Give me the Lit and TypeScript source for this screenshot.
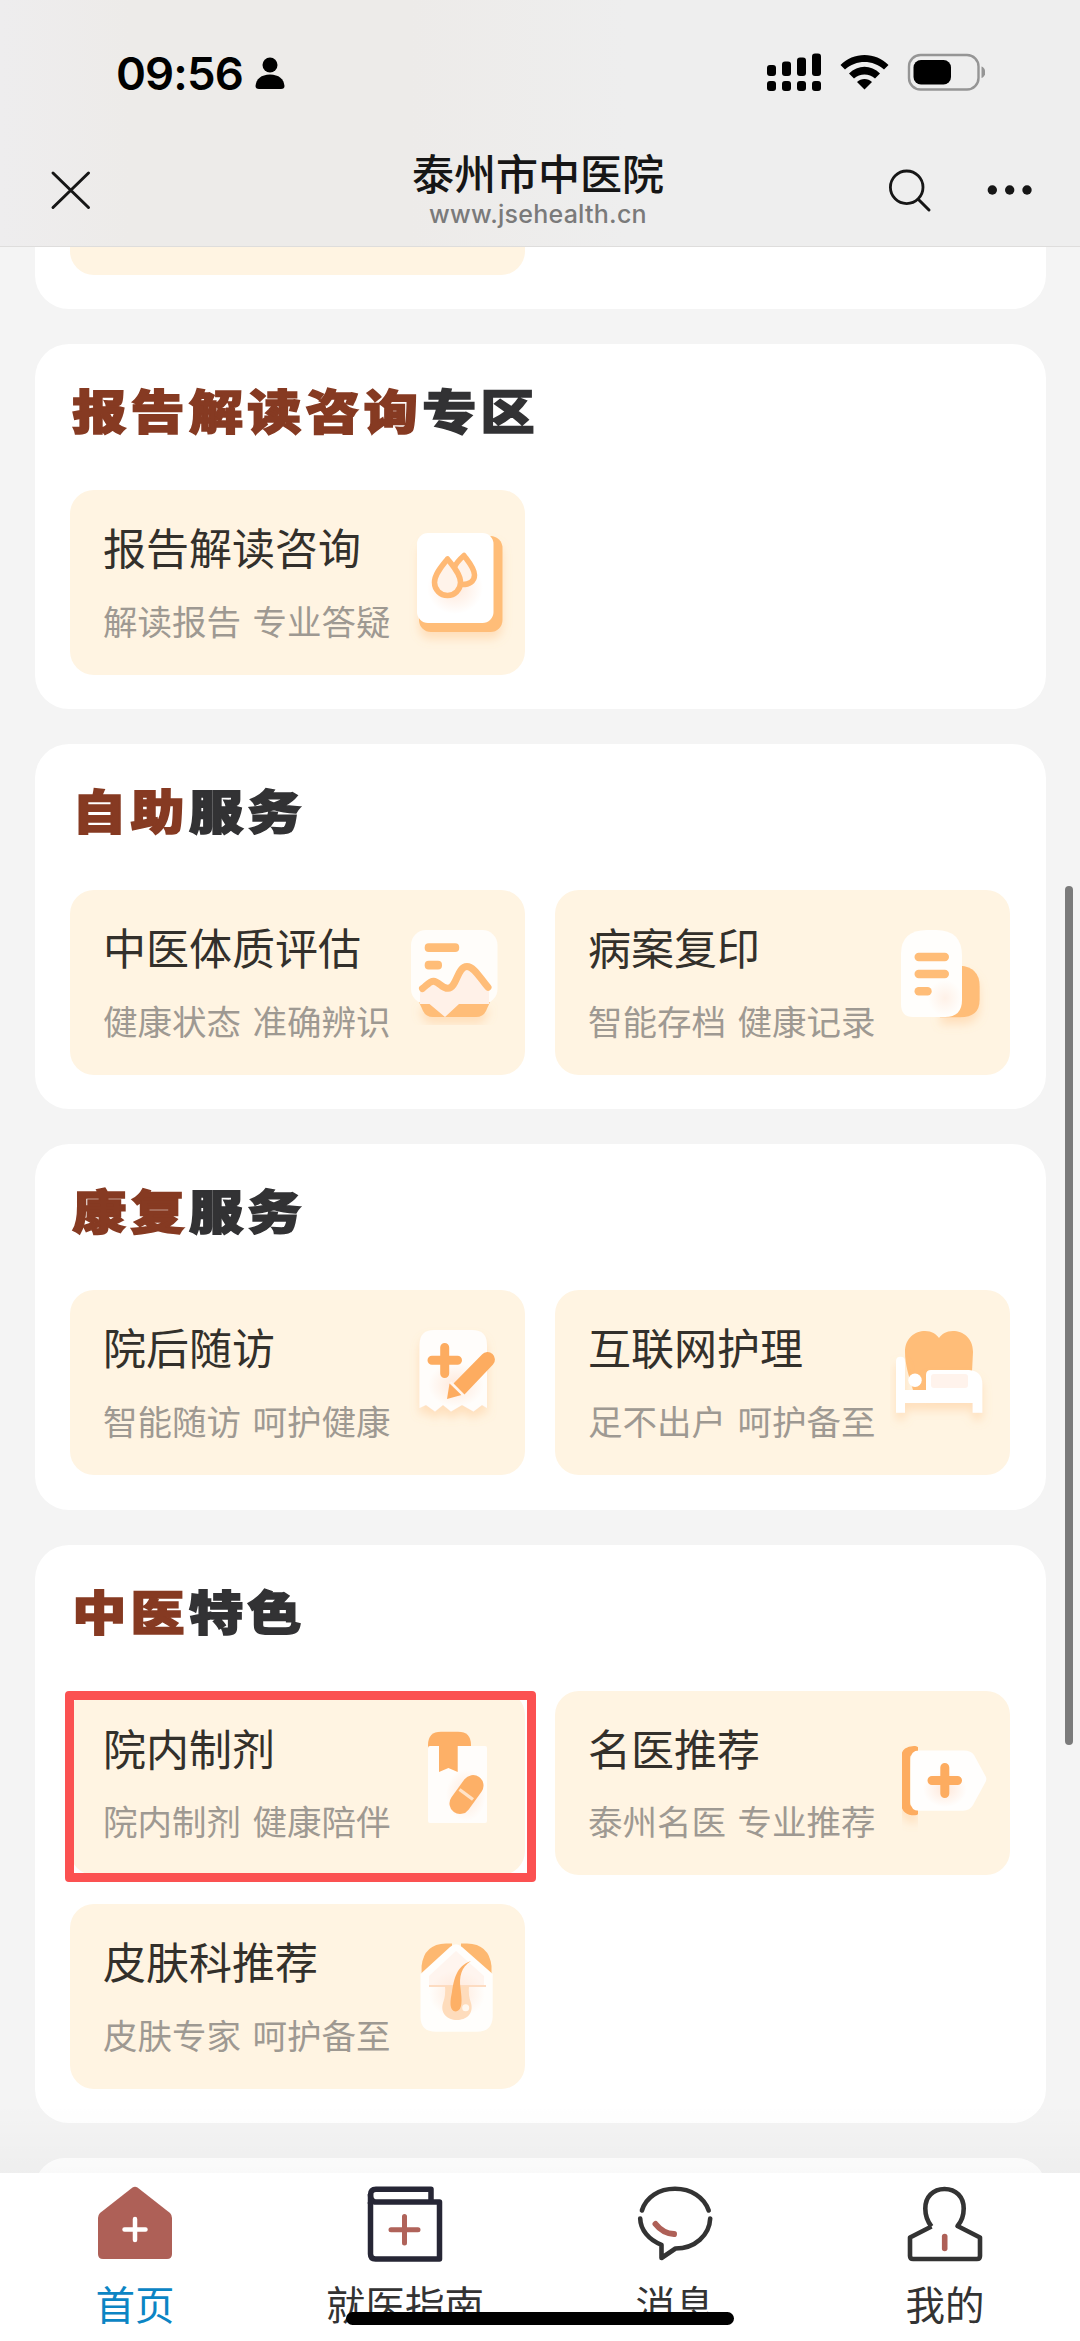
import { LitElement, html, css, svg, nothing, type SVGTemplateResult } from "lit";
import { customElement, property } from "lit/decorators.js";
import { classMap } from "lit/directives/class-map.js";

interface Service {
  name: string;
  note: string;
  icon: string;
  marked?: boolean;
}

interface Section {
  lead: string;
  tail: string;
  services: Service[];
}

const SECTIONS: Section[] = [
  {
    lead: "报告解读咨询",
    tail: "专区",
    services: [{ name: "报告解读咨询", note: "解读报告 专业答疑", icon: "report" }],
  },
  {
    lead: "自助",
    tail: "服务",
    services: [
      { name: "中医体质评估", note: "健康状态 准确辨识", icon: "assess" },
      { name: "病案复印", note: "智能存档 健康记录", icon: "copy" },
    ],
  },
  {
    lead: "康复",
    tail: "服务",
    services: [
      { name: "院后随访", note: "智能随访 呵护健康", icon: "follow" },
      { name: "互联网护理", note: "足不出户 呵护备至", icon: "nursing" },
    ],
  },
  {
    lead: "中医",
    tail: "特色",
    services: [
      { name: "院内制剂", note: "院内制剂 健康陪伴", icon: "medicine", marked: true },
      { name: "名医推荐", note: "泰州名医 专业推荐", icon: "doctor" },
      { name: "皮肤科推荐", note: "皮肤专家 呵护备至", icon: "skin" },
    ],
  },
];

/* Service icons, drawn on a 110 x 184.5 strip whose x axis starts at 335. */
const ICONS: Record<string, SVGTemplateResult> = {
  report: svg`
    <rect x="349" y="46" width="83.5" height="96" rx="12" fill="#ffbd78" filter="url(#drop)"/>
    <rect x="347" y="43" width="76.5" height="90" rx="11" fill="#fff"/>
    <ellipse cx="385" cy="98" rx="28" ry="26" fill="url(#blush)"/>
    <g fill="#fff3ea" stroke="#ffb974" stroke-width="5.500" stroke-linejoin="round">
      <path d="M384 78C386 73 390 69 394 65.500C398 71 404.500 78 404.500 85C404.500 91 399.500 95 391 94.500"/>
      <path d="M377.500 69C372 76 364.500 84 364.500 92.500a13 13 0 0 0 26 0C390.500 84 383 76 377.500 69z"/>
    </g>`,
  assess: svg`
    <path d="M349 112H420L416 121Q413 127 406 127H363Q356 127 353 121z" fill="#ffbd78" filter="url(#drop)"/>
    <rect x="341" y="40" width="86.500" height="74" rx="15" fill="#fffdfa"/>
    <path d="M350 98L363 91L378 98L397 77L419 98V114H389L375 127L359.500 114H350z" fill="#fff1e8"/>
    <rect x="354.700" y="53.300" width="34.500" height="8.700" rx="4" fill="#ffbd78"/>
    <rect x="354.700" y="70.700" width="17.300" height="8.700" rx="4" fill="#ffbd78"/>
    <path d="M352.500 98.500C357 95 360 91 363.500 91.200C369 91.500 372 98.500 378 98.300C387 98 387 76.500 397 76.500C404 76.500 410 88 418 97.300" fill="none" stroke="#ffbd78" stroke-width="7" stroke-linecap="round"/>`,
  copy: svg`
    <path d="M391 75.700H405Q424.600 77 424.600 96V110Q424.600 127.300 405 127.300H385z" fill="#ffbd78" filter="url(#drop)"/>
    <path d="M346 64Q346 40 372 40H381Q407 40 407 66V110Q407 127 390 127H358Q346 127 346 114z" fill="#fffefc"/>
    <ellipse cx="390" cy="108" rx="17" ry="18" fill="url(#blush)" opacity="0.6"/>
    <rect x="359.500" y="62.700" width="34.500" height="8.600" rx="4.200" fill="#ffbd78"/>
    <rect x="359.500" y="79.700" width="34.500" height="8.600" rx="4.200" fill="#ffbd78"/>
    <rect x="359.500" y="97" width="17.200" height="8.600" rx="4.200" fill="#ffbd78"/>`,
  follow: svg`
    <path d="M349.500 55Q349.500 40 364 40H402Q417 40 417 55V118L412 115L403.500 121.500L392 115L381 121.500L373 115L365 121.500L356 115L349.500 118z" fill="#fffdfb" filter="url(#drop)"/>
    <ellipse cx="386" cy="95" rx="28" ry="22" fill="url(#blush)"/>
    <path d="M374.700 57.500V83.500M362 70.300H387.500" stroke="#fdac60" stroke-width="9" stroke-linecap="round"/>
    <path d="M379.500 93.500L391.500 105L377 109z" fill="#fdac60"/>
    <path d="M383.500 93.500L412 64.500a7.300 7.300 0 0 1 11 10L394.500 104.500z" fill="#fdac60"/>
    <path d="M380.500 92L394 106" stroke="#fff6ef" stroke-width="2"/>`,
  nursing: svg`
    <path d="M350 62C350 48 360 41 370 41C377 41 381 44 384 48C387 44 391 41 398 41C408 41 418 48 418 62L417 82V100H358C354 86 350 75 350 62z" fill="#ffbd78"/>
    <path d="M345.500 66.700Q350 66.700 350 71V100H371V85Q371 80 376 80H414Q427.300 81 427.300 94V122.700H417.700V113H350V122.700H341V71Q341 66.700 345.500 66.700z" fill="#fff" filter="url(#drop)"/>
    <rect x="376" y="84" width="37" height="14" rx="3" fill="#fff3ec"/>
    <circle cx="360" cy="90.300" r="6.700" fill="#fff"/>`,
  medicine: svg`
    <path d="M358 60V54Q358 40.700 371 40.700H388Q401 40.700 401 54V60z" fill="#fdb067"/>
    <rect x="358" y="55" width="59" height="77" rx="2" fill="#fffdfb"/>
    <ellipse cx="396" cy="104" rx="20" ry="26" fill="url(#blush)"/>
    <path d="M369 50H387.700V81L378.400 77L369 81z" fill="#fdb067"/>
    <path d="M403 94.500L390 112.500" stroke="#fdb067" stroke-width="21" stroke-linecap="round"/>
    <path d="M389.500 98.500L403 108.500" stroke="#ffe3c8" stroke-width="3.400"/>`,
  doctor: svg`
    <path d="M360 59.500Q350.500 59 350.500 67V112Q350.500 120 360 119.800" fill="none" stroke="#fdac60" stroke-width="9" stroke-linecap="round" filter="url(#drop)"/>
    <path d="M355.700 68Q355.700 59.500 364 59.500H409Q416 59.500 419 64L431 86Q432 89 430 92L418 114Q415 119.700 408 119.700H364Q355.700 119.700 355.700 111z" fill="#fffefd"/>
    <ellipse cx="390" cy="98" rx="22" ry="18" fill="url(#blush)"/>
    <path d="M389.800 76.500V102.500M377 89.500H402.500" stroke="#fdac60" stroke-width="9" stroke-linecap="round"/>`,
  skin: svg`
    <path d="M351.600 76V62Q354 40 376 39.500H382V76z" fill="#fdb870"/>
    <path d="M421.500 76V62Q419 40 397 39.500H391V76z" fill="#fdb870"/>
    <path d="M380 43Q386 37.500 392 43L422.700 70V113Q422 127.700 407 127.700H366Q350.500 127.700 350.500 113V70z" fill="#fffefc"/>
    <path d="M386 47L414 72V82H359V72z" fill="#fff5ef"/>
    <ellipse cx="387" cy="90" rx="28" ry="24" fill="url(#blush)"/>
    <path d="M359 82H416" stroke="#fddcc2" stroke-width="2"/>
    <path d="M375 82H399Q398 91 401 99C404 110 396 116 387 116C377 116 370 109 373 99Q376 91 375 82z" fill="#fedcbc"/>
    <path d="M401 57C391 63 389 73 390.500 84C392 96 393 106 386 107.500C379 107 380 97 382 88C384 76 386 62 401 57z" fill="#fdb066"/>
    <circle cx="395.700" cy="103.700" r="3.500" fill="#fff8ef"/>`,
};

@customElement("service-tile")
class ServiceTile extends LitElement {
  @property({ attribute: false }) service!: Service;

  static styles = css`
    :host {
      display: block;
      position: relative;
    }
    .tile {
      box-sizing: border-box;
      height: 184.500px;
      padding-left: 33.500px;
      border-radius: 24px;
      background: #fff4e2;
      display: flex;
      justify-content: space-between;
    }
    .copy {
      padding-top: 26px;
      white-space: nowrap;
    }
    .name {
      font-size: 43px;
      line-height: 60px;
      color: #33302b;
    }
    .note {
      margin-top: 18.500px;
      font-size: 34.500px;
      line-height: 50px;
      word-spacing: 3.800px;
      color: #9e9992;
    }
    .art {
      flex: none;
      width: 110px;
      height: 184.500px;
      margin: 0 10px 0 -40px;
    }
    .mark {
      position: absolute;
      box-sizing: border-box;
      left: -5px;
      top: 0;
      width: 471.500px;
      height: 191px;
      border: 9px solid #fb5151;
      border-radius: 4px;
    }
  `;

  render() {
    const s = this.service;
    return html`
      <div class="tile">
        <div class="copy">
          <div class="name">${s.name}</div>
          <div class="note">${s.note}</div>
        </div>
        <svg class="art" viewBox="335 0 110 184.5">
          <defs>
            <filter id="drop" x="-30%" y="-30%" width="160%" height="180%">
              <feDropShadow dx="0" dy="7" stdDeviation="5" flood-color="#ffb26b" flood-opacity="0.32" />
            </filter>
            <radialGradient id="blush">
              <stop offset="0" stop-color="#ffe6d6" stop-opacity="0.9" />
              <stop offset="1" stop-color="#ffe6d6" stop-opacity="0" />
            </radialGradient>
          </defs>
          ${ICONS[s.icon]}
        </svg>
      </div>
      ${s.marked ? html`<div class="mark"></div>` : nothing}
    `;
  }
}

@customElement("service-section")
class ServiceSection extends LitElement {
  @property({ attribute: false }) section!: Section;

  static styles = css`
    :host {
      display: block;
    }
    .card {
      background: #fff;
      border-radius: 34px;
      padding: 33px 34.500px 34.700px 35px;
    }
    .title {
      display: flex;
      width: max-content;
      height: 64px;
      margin-bottom: 49px;
      align-items: center;
      font-size: 47px;
      line-height: 64px;
      font-weight: 900;
      letter-spacing: 3.700px;
      transform: scaleX(1.15);
      transform-origin: left center;
      -webkit-text-stroke: 1.600px currentColor;
      padding-left: 2px;
      color: #323234;
    }
    .lead {
      color: #863a22;
    }
    .grid {
      display: grid;
      grid-template-columns: 455.500px 455.500px;
      gap: 29px 29.500px;
    }
  `;

  render() {
    const { lead, tail, services } = this.section;
    return html`
      <section class="card">
        <div class="title"><span class="lead">${lead}</span><span>${tail}</span></div>
        <div class="grid">
          ${services.map((s) => html`<service-tile .service=${s}></service-tile>`)}
        </div>
      </section>
    `;
  }
}

const TABS = [
  {
    label: "首页",
    active: true,
    icon: svg`
      <path d="M36.500 3.500Q39 1.800 41.500 3.500L74 29Q76 31 76 34V70Q76 75 71 75H7Q2 75 2 70V34Q2 31 4 29z" fill="#ae6057"/>
      <path d="M39 35V56M28.500 45.500H49.500" stroke="#fff" stroke-width="4.500" stroke-linecap="round"/>`,
  },
  {
    label: "就医指南",
    active: false,
    icon: svg`
      <g fill="none" stroke="#262635" stroke-width="5.500" stroke-linejoin="round">
        <path d="M4.500 18V70Q4.500 75 9.500 75H73.500V18H9Q4.500 17 4.500 11Q4.500 5.200 10 5.200H65V17"/>
      </g>
      <path d="M4.500 10V20" stroke="#262635" stroke-width="5.500"/>
      <path d="M38.500 32.500V59M25 45.700H52" stroke="#b0635a" stroke-width="5" stroke-linecap="round"/>`,
  },
  {
    label: "消息",
    active: false,
    icon: svg`
      <g fill="none" stroke="#333" stroke-width="4.600" stroke-linecap="round" stroke-linejoin="round">
        <path d="M5.900 26.500C10 13 23 4.800 39 4.800C55 4.800 68 13 72.700 26.500"/>
        <path d="M4.200 34.500C4.500 46 13 56 25.500 60.800V74L39.500 64.500C59 64.500 73.500 51 74.200 34.500"/>
      </g>
      <path d="M19.500 40Q27 49.500 38 50" fill="none" stroke="#ae6057" stroke-width="6" stroke-linecap="round"/>`,
  },
  {
    label: "我的",
    active: false,
    icon: svg`
      <path d="M25.500 42.500C21.500 37.500 19.300 30 19.300 24.500C19.300 13 27 5 38.500 5C50 5 57.700 13 57.700 24.500C57.700 30 55.500 37.500 51.500 42L74 53.500V72Q74 75 71 75H7Q4 75 4 72V53.500L25.500 42.500" fill="none" stroke="#333" stroke-width="4.600" stroke-linejoin="round"/>
      <path d="M38.700 52.500V64.500" stroke="#ae6057" stroke-width="5.600" stroke-linecap="round"/>`,
  },
];

@customElement("app-root")
class AppRoot extends LitElement {
  static styles = css`
    :host {
      display: block;
      font-family: "Noto Sans CJK SC", "Liberation Sans", sans-serif;
    }
    .screen {
      position: relative;
      box-sizing: border-box;
      width: 1080px;
      height: 2341px;
      overflow: hidden;
      display: flex;
      flex-direction: column;
      background: #f4f4f4;
    }
    .header {
      flex: none;
      box-sizing: border-box;
      height: 247px;
      border-bottom: 1.500px solid #dedddc;
      background: linear-gradient(90deg, #eeedee 0, #edebe9 12%, #edebe9 38%, #eeeeee 58%);
    }
    .status {
      display: flex;
      align-items: center;
      height: 144px;
      padding: 0 95px 0 116px;
    }
    .clock {
      font-family: Inter, sans-serif;
      font-weight: 600;
      font-size: 45.500px;
      line-height: 56px;
      letter-spacing: -0.900px;
      color: #000;
      flex: none;
      width: 128px;
      padding-top: 3px;
      white-space: nowrap;
    }
    .person {
      width: 30px;
      height: 33px;
      margin: 3px 0 0 11px;
    }
    .signals {
      margin-left: auto;
      width: 219px;
      height: 40px;
    }
    .nav {
      display: grid;
      grid-template-columns: 1fr auto 1fr;
      height: 93px;
      padding: 0 47px 0 50px;
    }
    .close {
      width: 42px;
      height: 42px;
      margin-top: 25px;
    }
    .heading {
      text-align: center;
      white-space: nowrap;
      padding-right: 7px;
    }
    .site {
      font-size: 42px;
      line-height: 56px;
      font-weight: 500;
      color: #161616;
    }
    .url {
      font-family: Inter, sans-serif;
      font-size: 25px;
      font-weight: 500;
      line-height: 28px;
      letter-spacing: 0.250px;
      color: #7a7a7a;
    }
    .actions {
      justify-self: end;
      width: 146px;
      height: 46px;
      margin-top: 23px;
    }
    .list {
      flex: 1;
      min-height: 0;
      overflow: hidden;
      padding: 0 34.500px;
      display: flex;
      flex-direction: column;
      gap: 35px;
    }
    .previous {
      flex: none;
      height: 62px;
      border-radius: 0 0 34px 34px;
      background: #fff;
      padding-left: 35px;
    }
    .previous-tile {
      width: 455.500px;
      height: 27.500px;
      border-radius: 0 0 24px 24px;
      background: #fff4e2;
    }
    .next {
      flex: none;
      height: 60px;
      border-radius: 34px;
      background: #fff;
    }
    .tabbar {
      position: relative;
      flex: none;
      height: 168.500px;
      display: grid;
      grid-template-columns: repeat(4, 1fr);
      background: #fff;
    }
    .fade {
      position: absolute;
      left: 0;
      right: 0;
      bottom: 100%;
      height: 70px;
      background: linear-gradient(rgba(0, 0, 0, 0), rgba(0, 0, 0, 0.025));
    }
    .tab {
      display: flex;
      flex-direction: column;
      align-items: center;
      padding-top: 11.500px;
    }
    .tab-icon {
      width: 78px;
      height: 78px;
      flex: none;
    }
    .tab-label {
      margin-top: 11px;
      font-size: 39.500px;
      line-height: 60px;
      color: #333;
      white-space: nowrap;
    }
    .tab-label.active {
      color: #0b85c4;
    }
    .home-bar {
      position: absolute;
      left: 346px;
      bottom: 16px;
      width: 388px;
      height: 13px;
      border-radius: 7px;
      background: #000;
    }
    .scrollbar {
      position: absolute;
      left: 1064.500px;
      top: 885.500px;
      width: 8px;
      height: 859.500px;
      border-radius: 4px;
      background: #7b7b7b;
    }
  `;

  render() {
    return html`
      <div class="screen">
        <header class="header">
          <div class="status">
            <div class="clock">09:56</div>
            <svg class="person" viewBox="0 0 30 33">
              <circle cx="15" cy="8" r="7.500" />
              <path d="M0.500 29Q1.500 18 15 17.500Q28.500 18 29.500 29Q29.500 32 26 32H4Q0.500 32 0.500 29z" />
            </svg>
            <svg class="signals" viewBox="766 52 219 40">
              ${[65, 61.5, 57.5, 53.5].map(
                (top, i) => svg`
                  <rect x=${767 + i * 15} y=${top} width="9" height=${76 - top} rx="3"/>
                  <rect x=${767 + i * 15} y="81" width="9" height="10" rx="3"/>`
              )}
              <path d="M840.500 65C853 51.500 876 51.500 888.500 65L884 69.500C873 59.500 856 59.500 845 69.500z" />
              <path d="M849 73.500C858 64.500 871 64.500 880 73.500L875 78.500C869 73 860 73 854 78.500z" />
              <path d="M857 82C861 78 868 78 872 82L864.500 89.500z" />
              <rect x="909" y="55" width="69.500" height="34.500" rx="11.500" fill="none" stroke="#959595" stroke-width="2.400" />
              <rect x="913.500" y="60" width="37.500" height="24.500" rx="7.500" />
              <path d="M981.500 66.500C986.500 68 986.500 76.500 981.500 78z" fill="#959595" />
            </svg>
          </div>
          <div class="nav">
            <svg class="close" viewBox="0 0 42 42">
              <path d="M3 4L38.500 38.500M38.500 4L3 38.500" stroke="#161616" stroke-width="3" stroke-linecap="round" />
            </svg>
            <div class="heading">
              <div class="site">泰州市中医院</div>
              <div class="url">www.jsehealth.cn</div>
            </div>
            <svg class="actions" viewBox="887 167 146 46">
              <circle cx="906.700" cy="187.300" r="16.300" fill="none" stroke="#161616" stroke-width="2.800" />
              <path d="M918.500 199.500L929 210" stroke="#161616" stroke-width="3" stroke-linecap="round" />
              <circle cx="992.300" cy="190" r="4.700" fill="#161616" />
              <circle cx="1009.700" cy="190" r="4.700" fill="#161616" />
              <circle cx="1027" cy="190" r="4.700" fill="#161616" />
            </svg>
          </div>
        </header>

        <main class="list">
          <div class="previous"><div class="previous-tile"></div></div>
          ${SECTIONS.map((s) => html`<service-section .section=${s}></service-section>`)}
          <div class="next"></div>
        </main>

        <nav class="tabbar">
          <div class="fade"></div>
          ${TABS.map(
            (t) => html`
              <div class="tab">
                <svg class="tab-icon" viewBox="0 0 78 78">${t.icon}</svg>
                <div class=${classMap({ "tab-label": true, active: t.active })}>${t.label}</div>
              </div>
            `
          )}
          <div class="home-bar"></div>
        </nav>
        <div class="scrollbar"></div>
      </div>
    `;
  }
}
